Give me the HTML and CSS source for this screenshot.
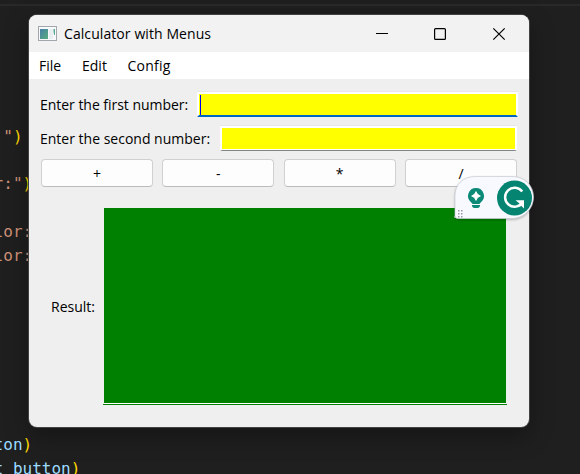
FILE: index.html
```html
<!DOCTYPE html>
<html lang="en">
<head>
<meta charset="utf-8">
<title>Calculator with Menus</title>
<link rel="stylesheet" href="styles.css">
</head>
<body>
<div class="editor">
<pre class="code"><span class="str"> "</span><span class="par">)</span>

<span class="str">r:"</span><span class="par">)</span>

<span class="str">lor:</span>
<span class="str">lor:</span>







<span class="var">ton</span><span class="par">)</span>
<span class="var">t button</span><span class="par">)</span></pre>
</div>
<main class="window">
  <header class="titlebar">
    <svg class="app-icon" width="19" height="15" viewBox="0 0 19 15">
      <defs><linearGradient id="g" x1="0" y1="0" x2="1" y2="1"><stop offset="0" stop-color="#477fa8"/><stop offset="1" stop-color="#58ad7c"/></linearGradient></defs>
      <rect x=".5" y=".5" width="18" height="14" fill="#f7f9fb" stroke="#a2a7ad"/>
      <rect x="2" y="3" width="8" height="10" fill="url(#g)"/>
      <rect x="11" y="3" width="4" height="10" fill="#e9eef0"/>
      <path d="M15.500 3h1.500v6h-.8l-.7-3z" fill="#58a994"/>
    </svg>
    <h1 class="title">Calculator with Menus</h1>
    <svg class="controls" width="131" height="14" viewBox="0 0 131 14" fill="none" stroke="#000">
      <path d="M1 6.5h12" />
      <rect x="59.6" y="1.6" width="10.8" height="10.8" rx="1" stroke-width="1.2"/>
      <path d="M118.300 1.300l11.400 11.400M129.700 1.300L118.300 12.700" stroke-width="1.2"/>
    </svg>
  </header>
  <nav class="menubar"><span class="m-file">File</span><span class="m-edit">Edit</span><span class="m-config">Config</span></nav>
  <section class="content">
    <div class="field first"><label class="l-first">Enter the first number:</label><div class="input focused"><i class="caret"></i></div></div>
    <div class="field second"><label class="l-second">Enter the second number:</label><div class="input"></div></div>
    <div class="buttons"><button>+</button><button>-</button><button>*</button><button>/</button></div>
    <div class="result"><label class="l-result">Result:</label><div class="output"><div class="fill"></div></div></div>
  </section>
  <aside class="assistant">
    <svg width="80" height="44" viewBox="0 0 80 44">
      <path d="M1 42V20C1 8 9 .5 22 .5H58C70 .5 79.500 9 79.500 21S70 42.500 58 42.500H4Q1 42.500 1 40Z" fill="#f8f9ff" stroke="#c9ccd4" stroke-width=".7"/>
      <path d="M22 12a8 8 0 0 0-5 14.200Q18.400 27.400 18.500 28H25.500Q25.600 27.400 27 26.200A8 8 0 0 0 22 12Z" fill="#0b8a78"/>
      <path d="M22 15.600Q23 19 26.400 20Q23 21 22 24.400Q21 21 17.600 20Q21 19 22 15.600Z" fill="#fff" stroke="#fff" stroke-width=".8"/>
      <path d="M18 29h8v1a3 2.500 0 0 1-2 2h-4a3 2.500 0 0 1-2-2z" fill="#0b8a78"/>
      <circle cx="60.500" cy="22" r="17.500" fill="#048471"/>
      <path d="M68.200 15.500A9.500 9.500 0 1 0 68.500 26.500" fill="none" stroke="#fff" stroke-width="2.500"/>
      <path d="M61.500 24.200H70V32.500L67 29.500L64.500 30.500L65.500 27.500Z" fill="#fff"/>
      <g fill="#999ba3"><path d="M4 34h1.500v1.500H4zM7 34h1.500v1.500H7zM4 37h1.500v1.500H4zM7 37h1.500v1.500H7zM4 40h1.500v1.500H4zM7 40h1.500v1.500H7z"/></g>
    </svg>
  </aside>
</main>
</body>
</html>
```
FILE: styles.css
```css
* { box-sizing: border-box; }
body {
  margin: 0;
  width: 580px;
  height: 474px;
  overflow: hidden;
  position: relative;
  background: #1f1f1f;
  color: #000;
  font-family: "Open Sans", "Noto Sans", sans-serif;
  font-size: 14px;
}
.editor { height: 474px; padding-top: 4px; overflow: hidden; }
.editor::before { content: ""; display: block; height: 2px; background: #292929; }
.code {
  margin: 119px 0 0 -6.4px;
  font: 16px/23.7px "DejaVu Sans Mono", monospace;
}
.str { color: #ce9178; }
.par { color: #ffd700; }
.var { color: #9cdcfe; }
.window {
  position: absolute;
  left: 29px;
  top: 15px;
  width: 500px;
  height: 412px;
  background: #efefef;
  border-radius: 8px;
  box-shadow: 0 0 0 1px #424242, 0 8px 24px rgba(0, 0, 0, .35);
}
.titlebar {
  height: 37px;
  display: flex;
  align-items: center;
  padding: 0 23px 0 9px;
  background: #f2f2f2;
  border-radius: 8px 8px 0 0;
}
.title { margin: 0 0 0 7px; font-size: 14px; font-weight: 400; letter-spacing: .08px; white-space: nowrap; }
.controls { margin-left: auto; }
.menubar {
  height: 27px;
  display: flex;
  align-items: center;
  padding-left: 10px;
  background: #fff;
}
.m-file { width: 43px; }
.m-edit { width: 45.500px; }
.m-config { letter-spacing: .25px; }
.content { padding: 12px 11px 0; }
.field { display: flex; align-items: center; height: 27px; }
.field label { white-space: nowrap; }
.first label { width: 157px; letter-spacing: -.03px; }
.second { margin-top: 7px; }
.second label { width: 180px; }
.input {
  flex: 1;
  height: 25px;
  background: #ff0;
  border: 2px solid #fff;
  border-bottom: 1px solid #858585;
  box-shadow: inset 0 -1px #fff, 0 -1px #e7e7e7;
}
.second .input { margin-right: 1px; }
.focused { border-bottom: 2px solid #0067c0; box-shadow: 0 -1px #e7e7e7; }
.caret { display: block; width: 1px; height: 20px; margin: 1px 0 0 1px; background: #00f; }
.buttons { display: grid; grid-template-columns: repeat(4, 112px); column-gap: 9.330px; margin: 7px 0 0 1px; }
button {
  height: 28px;
  padding: 0;
  font: 14px "Open Sans", sans-serif;
  color: #000;
  background: #fdfdfd;
  border: 1px solid #d0d0d0;
  border-bottom-color: #bcbcbc;
  border-radius: 4px;
}
.result { display: flex; align-items: center; margin-top: 21px; padding-left: 11px; }
.result label { width: 52px; }
.output { width: 404px; height: 197px; padding: 0 1px; border-bottom: 1px solid #008000; }
.fill { height: 196px; background: #008000; border-bottom: 1px solid #fff; }
.assistant { position: absolute; left: 425px; top: 161px; width: 80px; height: 44px; filter: drop-shadow(0 1px 1px rgba(0, 0, 0, .25)); }
.assistant svg { display: block; }
```
